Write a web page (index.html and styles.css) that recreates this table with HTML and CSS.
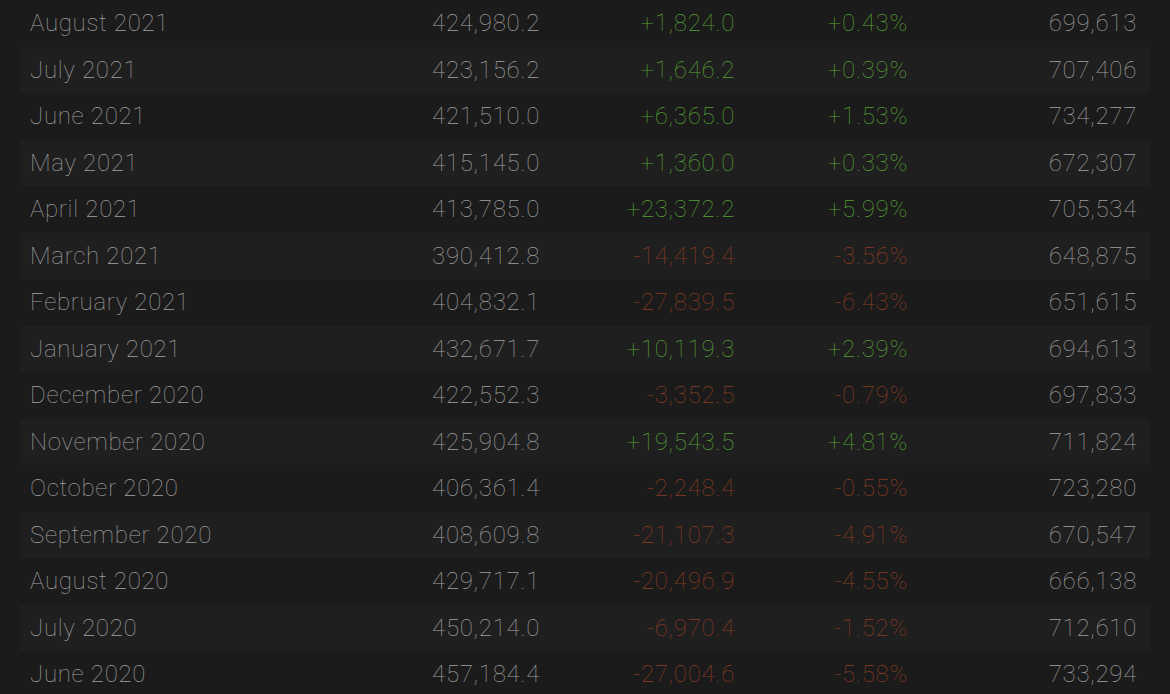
FILE: index.html
```html
<!DOCTYPE html>
<html lang="en">
  <head>
    <meta charset="UTF-8" />
    <title>Monthly Players</title>
    <link rel="stylesheet" href="styles.css">
  </head>
  <body>
    <main class="container">
      <table class="stats">
        <colgroup>
          <col class="c-month" />
          <col class="c-avg" />
          <col class="c-gain" />
          <col class="c-pct" />
          <col class="c-peak" />
        </colgroup>
        <tbody>
          <tr><td>August 2021</td><td>424,980.2</td><td class="up">+1,824.0</td><td class="up">+0.43%</td><td>699,613</td></tr>
          <tr><td>July 2021</td><td>423,156.2</td><td class="up">+1,646.2</td><td class="up">+0.39%</td><td>707,406</td></tr>
          <tr><td>June 2021</td><td>421,510.0</td><td class="up">+6,365.0</td><td class="up">+1.53%</td><td>734,277</td></tr>
          <tr><td>May 2021</td><td>415,145.0</td><td class="up">+1,360.0</td><td class="up">+0.33%</td><td>672,307</td></tr>
          <tr><td>April 2021</td><td>413,785.0</td><td class="up">+23,372.2</td><td class="up">+5.99%</td><td>705,534</td></tr>
          <tr><td>March 2021</td><td>390,412.8</td><td class="down">-14,419.4</td><td class="down">-3.56%</td><td>648,875</td></tr>
          <tr><td>February 2021</td><td>404,832.1</td><td class="down">-27,839.5</td><td class="down">-6.43%</td><td>651,615</td></tr>
          <tr><td>January 2021</td><td>432,671.7</td><td class="up">+10,119.3</td><td class="up">+2.39%</td><td>694,613</td></tr>
          <tr><td>December 2020</td><td>422,552.3</td><td class="down">-3,352.5</td><td class="down">-0.79%</td><td>697,833</td></tr>
          <tr><td>November 2020</td><td>425,904.8</td><td class="up">+19,543.5</td><td class="up">+4.81%</td><td>711,824</td></tr>
          <tr><td>October 2020</td><td>406,361.4</td><td class="down">-2,248.4</td><td class="down">-0.55%</td><td>723,280</td></tr>
          <tr><td>September 2020</td><td>408,609.8</td><td class="down">-21,107.3</td><td class="down">-4.91%</td><td>670,547</td></tr>
          <tr><td>August 2020</td><td>429,717.1</td><td class="down">-20,496.9</td><td class="down">-4.55%</td><td>666,138</td></tr>
          <tr><td>July 2020</td><td>450,214.0</td><td class="down">-6,970.4</td><td class="down">-1.52%</td><td>712,610</td></tr>
          <tr><td>June 2020</td><td>457,184.4</td><td class="down">-27,004.6</td><td class="down">-5.58%</td><td>733,294</td></tr>
        </tbody>
      </table>
    </main>
  </body>
</html>
```

FILE: styles.css
```css
/* Reset */
* {
  margin: 0;
  padding: 0;
  box-sizing: border-box;
}

body {
  font-family: Roboto, "Liberation Sans", sans-serif;
  font-weight: 100;
  background: #1b1b1b;
  color: #a0a0a0;
  overflow: hidden;
}

.container {
  padding: 0 20px;
}

.stats {
  width: 1130px;
  border-collapse: collapse;
  table-layout: fixed;
}

.c-month { width: 330px; }
.c-avg { width: 200px; }
.c-gain { width: 195px; }
.c-pct { width: 173px; }
.c-peak { width: 232px; }

.stats td {
  height: 46.5px;
  padding: 0 10px;
  font-size: 24px;
  letter-spacing: 0.7px;
  line-height: 1;
  text-align: right;
  white-space: nowrap;
}

.stats td:first-child {
  text-align: left;
}

.stats td:last-child {
  padding-right: 13px;
}

.stats tr:nth-child(even) {
  background: #1f1f1f;
}

td.up {
  color: #55a036;
}

td.down {
  color: #8a3c20;
}
```
